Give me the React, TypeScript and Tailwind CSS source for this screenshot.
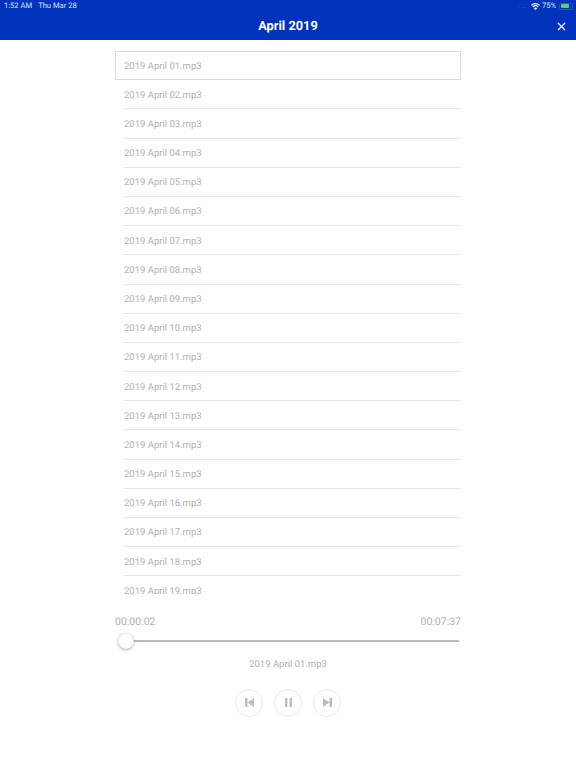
import { X } from 'lucide-react';

const tracks = Array.from({ length: 19 }, (_, i) => `2019 April ${String(i + 1).padStart(2, '0')}.mp3`);

function CircleButton({ children }: { children: React.ReactNode }) {
  return (
    <button type="button" className="w-[28px] h-[28px] rounded-full border border-[#ececec] bg-white flex items-center justify-center">
      {children}
    </button>
  );
}

export default function App() {
  return (
    <div className="w-[576px] h-[768px] bg-white overflow-hidden flex flex-col font-['Roboto',sans-serif] [text-rendering:geometricPrecision]">
      <header className="h-[40px] shrink-0 bg-[#0033bb] text-white relative flex items-center justify-center">
        <div className="absolute top-0 left-[4px] h-[12px] flex items-center gap-[6px] text-[7.6px] text-[#dde4f8]">
          <span>1:52 AM</span>
          <span>Thu Mar 28</span>
        </div>
        <div className="absolute top-0 right-[3px] h-[12px] flex items-center gap-[2px] text-[7.6px] text-[#dde4f8]">
          <span className="text-[#6f88d6] tracking-[0.5px] mr-[2px] text-[6px]">....</span>
          <svg width="9" height="7" viewBox="0 0 18 14" fill="white">
            <path d="M9 14 L5.8 10.4 A4.6 4.6 0 0 1 12.2 10.4 Z" />
            <path d="M4.4 8.8 L2.8 7 A9 9 0 0 1 15.2 7 L13.6 8.8 A6.8 6.8 0 0 0 4.4 8.8 Z" />
            <path d="M1.6 5.600 L0 3.800 A13 13 0 0 1 18 3.800 L16.400 5.600 A10.800 10.800 0 0 0 1.600 5.600 Z" />
          </svg>
          <span>75%</span>
          <div className="w-[14px] h-[7px] rounded-[2px] border border-[#2f52bd] p-[0.5px] ml-[1px]">
            <div className="w-[8px] h-full bg-[#4cd964] rounded-[1px]" />
          </div>
        </div>
        <h1 className="text-[12.8px] font-bold mt-[14px]">April 2019</h1>
        <X className="absolute right-[8px] top-[20px] w-[13px] h-[13px]" strokeWidth={2.2} />
      </header>

      <main className="w-[346px] mx-auto flex-1 flex flex-col">
        <ul className="mt-[11px] h-[542.5px] overflow-hidden">
          {tracks.map((t, i) => (
            <li
              key={t}
              className={
                i === 0
                  ? 'h-[29.2px] flex items-center pl-[8px] pt-[3px] border border-[#dcdcdc] text-[9.5px] text-[#b0b0b0]'
                  : 'h-[29.2px] flex items-center ml-[9px] pt-[3px] border-b border-[#e4e4e4] text-[9.5px] text-[#b0b0b0]'
              }
            >
              {t}
            </li>
          ))}
        </ul>

        <div className="flex justify-between text-[10.5px] text-[#b0b0b0] mt-[20px]">
          <span>00:00:02</span>
          <span>00:07:37</span>
        </div>

        <div className="relative h-[20px] mt-[2px] flex items-center pl-[3px] pr-[2px]">
          <div className="w-full h-[2px] bg-[#bcbcbc]" />
          <div className="absolute left-[3px] top-[2px] w-[16px] h-[16px] rounded-full bg-white border border-[#eeeeee] shadow-[0_1px_3px_rgba(0,0,0,0.3)]" />
        </div>

        <p className="text-center text-[9.5px] text-[#b0b0b0] mt-[7px]">2019 April 01.mp3</p>

        <div className="flex justify-center gap-[11px] mt-[16px]">
          <CircleButton>
            <svg width="9" height="9" viewBox="0 0 9 9" fill="#bdbdbd"><path d="M0 0h2.500v9H0zM9 0v9L2.500 4.500z" /></svg>
          </CircleButton>
          <CircleButton>
            <svg width="7" height="9" viewBox="0 0 7 9" fill="#bdbdbd"><path d="M0 0h2.400v9H0zM4.600 0H7v9H4.600z" /></svg>
          </CircleButton>
          <CircleButton>
            <svg width="9" height="9" viewBox="0 0 9 9" fill="#bdbdbd"><path d="M9 0H6.500v9H9zM0 0v9l6.500-4.500z" /></svg>
          </CircleButton>
        </div>
      </main>
    </div>
  );
}
